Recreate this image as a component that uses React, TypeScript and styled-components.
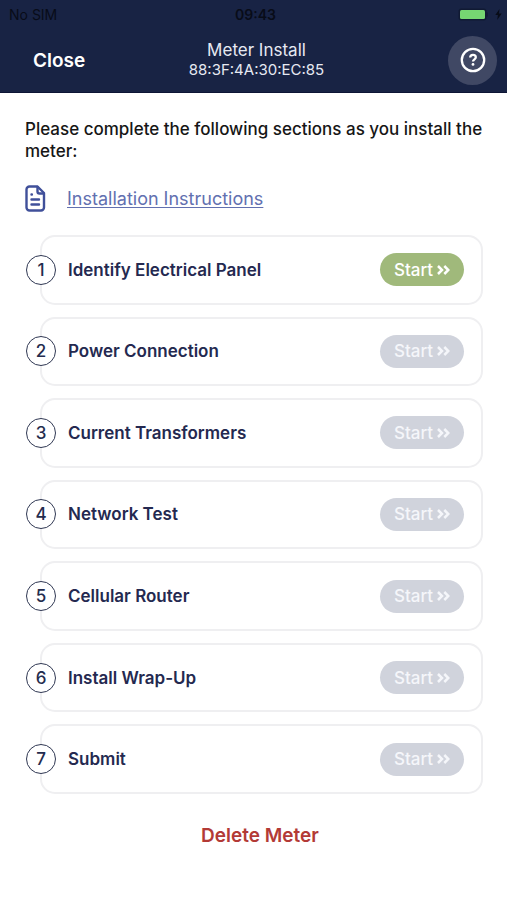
import React from "react";
import styled, { createGlobalStyle } from "styled-components";

const navy = "#182344";

const GlobalStyle = createGlobalStyle`
  *, *::before, *::after { box-sizing: border-box; }
  body {
    margin: 0;
    background: #fff;
    font-family: Inter, "Liberation Sans", sans-serif;
  }
  button { font-family: inherit; border: 0; background: none; cursor: pointer; }
  button:disabled { cursor: default; }
`;

const Screen = styled.div`
  display: flex;
  flex-direction: column;
  min-height: 100vh;
`;

const Header = styled.header`
  background: ${navy};
  border-bottom: 1px solid #0d1535;
`;

const StatusBar = styled.div`
  display: grid;
  grid-template-columns: 1fr auto 1fr;
  align-items: center;
  height: 28px;
  padding: 0 5px 0 9px;
  color: #080c18;
  font-size: 14px;
`;

const Clock = styled.span`
  font-weight: 600;
`;

const Power = styled.span`
  display: flex;
  justify-content: flex-end;
  align-items: center;
  gap: 7px;
`;

const NavBar = styled.div`
  display: grid;
  grid-template-columns: 1fr auto 1fr;
  align-items: center;
  height: 64px;
  padding: 0 10px 0 33px;
`;

const CloseButton = styled.button`
  justify-self: start;
  padding: 0;
  color: #fff;
  font-size: 19px;
  font-weight: 600;
`;

const Heading = styled.div`
  text-align: center;
  color: #e6e9f2;
  margin-right: 17px;
`;

const Title = styled.h1`
  margin: 0;
  font-size: 17px;
  line-height: 20px;
  font-weight: 400;
`;

const Address = styled.p`
  margin: 0;
  font-size: 15px;
  line-height: 20px;
`;

const HelpButton = styled.button`
  display: grid;
  place-items: center;
  justify-self: end;
  width: 49px;
  height: 49px;
  padding: 0;
  border-radius: 50%;
  background: #404864;
`;

const Main = styled.main`
  display: flex;
  flex: 1;
  flex-direction: column;
  padding: 25px 24px 51px 25px;
`;

const Intro = styled.p`
  margin: 0;
  color: #161616;
  font-size: 17px;
  line-height: 22px;
  font-weight: 500;
`;

const Guide = styled.div`
  display: flex;
  align-items: center;
  gap: 21px;
  margin: 22px 0 23px;
  height: 28px;
`;

const GuideLink = styled.a`
  color: #6270b0;
  font-size: 18px;
  text-decoration: underline;
  text-underline-offset: 2px;
  text-decoration-thickness: 1px;
`;

const Steps = styled.ol`
  display: grid;
  flex: 1;
  grid-auto-rows: minmax(69px, 1fr);
  gap: 12px;
  margin: 0;
  padding: 0 0 0 15px;
  list-style: none;
`;

const Step = styled.li`
  display: flex;
  align-items: center;
  padding-right: 17px;
  border: 2px solid #efeff1;
  border-radius: 15px;
`;

const StepNumber = styled.span`
  display: grid;
  place-items: center;
  flex: none;
  width: 30px;
  height: 30px;
  margin-left: -16px;
  border: 1px solid #303853;
  border-radius: 50%;
  background: #fff;
  color: #242c4e;
  font-size: 17px;
  font-weight: 500;
`;

const StepName = styled.span`
  flex: 1;
  margin-left: 12px;
  color: #242950;
  font-size: 17px;
  font-weight: 600;
`;

const StartButton = styled.button`
  display: flex;
  align-items: center;
  justify-content: center;
  gap: 4px;
  width: 84px;
  height: 33px;
  padding: 0;
  border-radius: 17px;
  background: #a0b97b;
  color: #fff;
  font-size: 17px;
  font-weight: 500;

  &:disabled {
    background: #d0d3dc;
    color: #f5f6fa;
  }
`;

const DeleteButton = styled.button`
  align-self: center;
  margin: 29px 0 0 12px;
  padding: 0;
  color: #b33a36;
  font-size: 19px;
  line-height: 26px;
  font-weight: 600;
`;

const steps = [
  "Identify Electrical Panel",
  "Power Connection",
  "Current Transformers",
  "Network Test",
  "Cellular Router",
  "Install Wrap-Up",
  "Submit",
];

const BatteryIcon = () => (
  <svg width="30" height="13" viewBox="0 0 30 13" aria-hidden="true">
    <rect x="0.5" y="0.5" width="28" height="12" rx="3" fill="#101a33" />
    <rect x="2" y="2" width="25" height="9" rx="1.5" fill="#76d672" />
    <path d="M29 4.5v4" stroke="#101a33" strokeWidth="1.5" />
  </svg>
);

const BoltIcon = () => (
  <svg width="7" height="11" viewBox="0 0 7 11" aria-hidden="true">
    <path d="M4.5 0 0.3 6h2.6L2.2 11 6.7 4.6H4Z" fill="#080c18" />
  </svg>
);

const HelpIcon = () => (
  <svg width="26" height="26" viewBox="0 0 26 26" fill="none" stroke="#fff" aria-hidden="true">
    <circle cx="13" cy="13" r="11.2" strokeWidth="2.3" />
    <path
      d="M10.2 10.6c0-1.7 1.1-2.7 2.8-2.7s2.8 1 2.8 2.4c0 2.1-2.8 2-2.8 4.3"
      strokeWidth="2.3"
    />
    <circle cx="13" cy="17.4" r="1.4" fill="#fff" stroke="none" />
  </svg>
);

const DocumentIcon = () => (
  <svg
    width="21"
    height="27"
    viewBox="0 0 21 27"
    fill="none"
    stroke="#40509a"
    strokeWidth="2.4"
    strokeLinecap="round"
    strokeLinejoin="round"
    aria-hidden="true"
  >
    <path d="M12.5 1.5H4.5a3 3 0 0 0-3 3v18a3 3 0 0 0 3 3h11.5a3 3 0 0 0 3-3V8Z" />
    <path d="M12.5 2v4.5a2 2 0 0 0 2 2H18.5" />
    <path d="M6.5 9.5h.4M6.5 14.5h7.5M6.5 19.5h7.5" />
  </svg>
);

const ChevronsIcon = () => (
  <svg
    width="13"
    height="10"
    viewBox="0 0 13 10"
    fill="none"
    stroke="currentColor"
    strokeWidth="2.5"
    aria-hidden="true"
  >
    <path d="M1 1l4 4-4 4M7.3 1l4 4-4 4" />
  </svg>
);

export default function App() {
  return (
    <Screen>
      <GlobalStyle />
      <Header>
        <StatusBar>
          <span>No SIM</span>
          <Clock>09:43</Clock>
          <Power>
            <BatteryIcon />
            <BoltIcon />
          </Power>
        </StatusBar>
        <NavBar>
          <CloseButton type="button">Close</CloseButton>
          <Heading>
            <Title>Meter Install</Title>
            <Address>88:3F:4A:30:EC:85</Address>
          </Heading>
          <HelpButton type="button" aria-label="Help">
            <HelpIcon />
          </HelpButton>
        </NavBar>
      </Header>
      <Main>
        <Intro>Please complete the following sections as you install the meter:</Intro>
        <Guide>
          <DocumentIcon />
          <GuideLink href="#instructions">Installation Instructions</GuideLink>
        </Guide>
        <Steps>
          {steps.map((name, index) => (
            <Step key={name}>
              <StepNumber>{index + 1}</StepNumber>
              <StepName id={`step-${index + 1}`}>{name}</StepName>
              <StartButton
                type="button"
                disabled={index > 0}
                aria-describedby={`step-${index + 1}`}
              >
                Start
                <ChevronsIcon />
              </StartButton>
            </Step>
          ))}
        </Steps>
        <DeleteButton type="button">Delete Meter</DeleteButton>
      </Main>
    </Screen>
  );
}
